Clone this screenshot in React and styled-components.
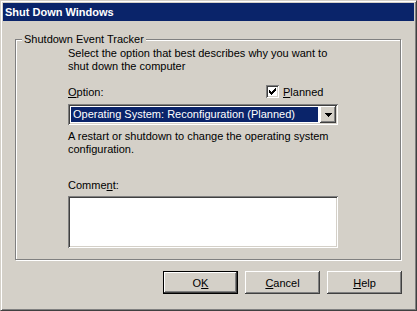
import React from 'react'
import styled, { createGlobalStyle } from 'styled-components'

const GlobalStyle = createGlobalStyle`
  html, body {
    margin: 0;
    padding: 0;
    background: #d4d0c8;
  }
  body {
    font-family: "Liberation Sans", Arial, sans-serif;
    font-size: 11px;
    color: #000;
  }
`

const raised = `
  box-shadow: inset -1px -1px #404040, inset 1px 1px #fff,
    inset -2px -2px #808080, inset 2px 2px #d4d0c8;
`
const sunken = `
  box-shadow: inset 1px 1px #808080, inset -1px -1px #fff,
    inset 2px 2px #404040, inset -2px -2px #d4d0c8;
`

const Window = styled.div`
  width: 417px;
  height: 311px;
  box-sizing: border-box;
  background: #d4d0c8;
  border: 1px solid;
  border-color: #d4d0c8 #404040 #404040 #d4d0c8;
  box-shadow: inset 1px 1px #fff, inset -1px -1px #808080;
  padding: 2px;
  display: flex;
  flex-direction: column;
`
const TitleBar = styled.div`
  height: 18px;
  background: #0a246a;
  color: #fff;
  font-weight: bold;
  font-size: 11px;
  display: flex;
  align-items: center;
  padding-left: 2px;
`
const Body = styled.div`
  display: flex;
  flex-direction: column;
  padding: 18px 13px 0 12px;
`
const GroupBox = styled.div`
  position: relative;
  height: 221px;
  box-sizing: border-box;
  border: 1px solid #808080;
  box-shadow: inset 1px 1px #fff, 1px 1px #fff;
  padding: 7px 0 0 52px;
  display: flex;
  flex-direction: column;
`
const Legend = styled.span`
  position: absolute;
  top: -7px;
  left: 6px;
  padding: 0 2px;
  line-height: 13px;
  background: #d4d0c8;
`
const Text = styled.p`
  margin: ${({ $top }) => $top || 0}px 0 0;
  line-height: 13px;
  white-space: nowrap;
`
const Row = styled.div`
  display: flex;
  align-items: center;
  width: 270px;
  height: 13px;
  margin-top: 12px;
`
const CheckLabel = styled.label`
  margin-left: auto;
  width: 72px;
  display: flex;
  align-items: center;
  gap: 4px;
`
const CheckBox = styled.span`
  width: 13px;
  height: 13px;
  box-sizing: border-box;
  background: #fff;
  ${sunken}
  display: flex;
  align-items: center;
  justify-content: center;
`
const Combo = styled.div`
  width: 270px;
  height: 21px;
  margin-top: 6px;
  box-sizing: border-box;
  background: #fff;
  ${sunken}
  padding: 2px;
  display: flex;
  gap: 1px;
`
const Selected = styled.div`
  flex: 1;
  margin: 1px;
  background: #0a246a;
  color: #fff;
  padding-left: 2px;
  line-height: 15px;
  white-space: nowrap;
  overflow: hidden;
`
const DropButton = styled.div`
  width: 16px;
  height: 17px;
  background: #d4d0c8;
  ${raised}
  display: flex;
  align-items: center;
  justify-content: center;
`
const TextArea = styled.div`
  width: 270px;
  height: 52px;
  margin-top: 4px;
  box-sizing: border-box;
  background: #fff;
  ${sunken}
`
const ButtonRow = styled.div`
  display: flex;
  justify-content: flex-end;
  gap: 7px;
  margin-top: 11px;
  margin-right: -1px;
`
const Button = styled.div`
  width: 75px;
  height: 23px;
  box-sizing: border-box;
  background: #d4d0c8;
  display: flex;
  align-items: center;
  justify-content: center;
  ${({ $default }) =>
    $default
      ? `border: 1px solid #000;
         box-shadow: inset -1px -1px #404040, inset 1px 1px #fff,
           inset -2px -2px #808080;`
      : raised}
`
const Key = styled.span`
  text-decoration: underline;
  text-underline-offset: 1px;
`

const CheckMark = () => (
  <svg width="7" height="7" viewBox="0 0 7 7" shapeRendering="crispEdges">
    <path
      d="M6 0h1v3h-1zM5 1h1v3h-1zM4 2h1v3h-1zM3 3h1v3h-1zM2 4h1v3h-1zM1 3h1v3h-1zM0 2h1v3h-1z"
      fill="#000"
    />
  </svg>
)

const Arrow = () => (
  <svg width="7" height="4" viewBox="0 0 7 4" shapeRendering="crispEdges">
    <path d="M0 0h7v1h-1v1h-1v1h-1v1h-1v-1h-1v-1h-1v-1h-1z" fill="#000" />
  </svg>
)

export default function App() {
  return (
    <>
      <GlobalStyle />
      <Window>
        <TitleBar>Shut Down Windows</TitleBar>
        <Body>
          <GroupBox>
            <Legend>Shutdown Event Tracker</Legend>
            <Text>
              Select the option that best describes why you want to
              <br />
              shut down the computer
            </Text>
            <Row>
              <span>
                <Key>O</Key>ption:
              </span>
              <CheckLabel>
                <CheckBox>
                  <CheckMark />
                </CheckBox>
                <span>
                  <Key>P</Key>lanned
                </span>
              </CheckLabel>
            </Row>
            <Combo>
              <Selected>Operating System: Reconfiguration (Planned)</Selected>
              <DropButton>
                <Arrow />
              </DropButton>
            </Combo>
            <Text $top={5}>
              A restart or shutdown to change the operating system
              <br />
              configuration.
            </Text>
            <Text $top={23}>
              Comme<Key>n</Key>t:
            </Text>
            <TextArea />
          </GroupBox>
          <ButtonRow>
            <Button $default>
              <span>
                O<Key>K</Key>
              </span>
            </Button>
            <Button>
              <span>
                <Key>C</Key>ancel
              </span>
            </Button>
            <Button>
              <span>
                <Key>H</Key>elp
              </span>
            </Button>
          </ButtonRow>
        </Body>
      </Window>
    </>
  )
}
